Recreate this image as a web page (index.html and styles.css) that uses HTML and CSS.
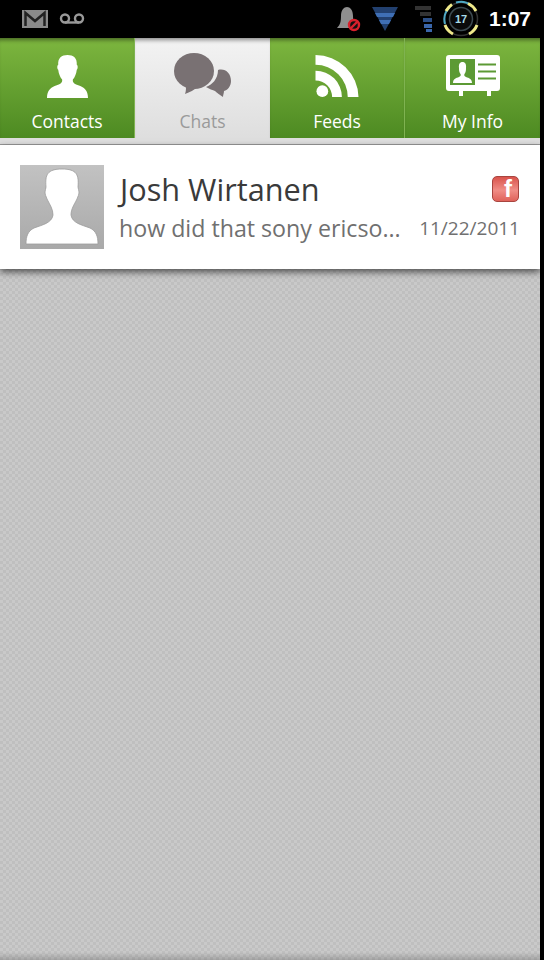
FILE: index.html
```html
<!DOCTYPE html>
<html lang="en">

<head>
    <meta charset="UTF-8">
    <title>Chats</title>
    <link rel="stylesheet" href="styles.css">
</head>

<body>
    <div class="screen">
        <div class="status">
            <div class="status-left">
                <svg class="ic-mail" width="26" height="18" viewBox="0 0 26 18">
                    <rect width="26" height="18" fill="#8a8a8a" />
                    <path d="M3.5 16V3L13 11 22.500 3V16" fill="none" stroke="#222" stroke-width="2.500" />
                </svg>
                <svg class="ic-vm" width="26" height="12" viewBox="0 0 26 12">
                    <circle cx="6" cy="5.500" r="4" fill="none" stroke="#999" stroke-width="2.400" />
                    <circle cx="20" cy="5.500" r="4" fill="none" stroke="#999" stroke-width="2.400" />
                    <path d="M6 9.500H20" stroke="#999" stroke-width="2.400" />
                </svg>
            </div>
            <div class="status-right">
                <svg class="ic-bell" width="26" height="26" viewBox="0 0 26 26">
                    <path d="M1 22C4 19 5 16 5 10 5 4 8 1 11 1 14 1 17 4 17 10 17 16 19 19 21 22Z" fill="#8f8f8f" />
                    <circle cx="18" cy="19" r="5" fill="#111" stroke="#d8202c" stroke-width="2.400" />
                    <path d="M14.500 22.500 21.500 15.500" stroke="#d8202c" stroke-width="2.400" />
                </svg>
                <svg class="ic-wifi" width="26" height="24" viewBox="0 0 26 24">
                    <path d="M0 0H26L13 24Z" fill="#22406f" />
                    <path d="M3 6H23L21 10H5ZM7 13H19L17 17H9Z" fill="#3f6fb5" />
                </svg>
                <svg class="ic-signal" width="18" height="26" viewBox="0 0 18 26">
                    <rect x="0" y="0" width="16" height="4" fill="#333" />
                    <rect x="5" y="6" width="11" height="4" fill="#333" />
                    <rect x="8" y="12" width="9" height="4" fill="#2c4f86" />
                    <rect x="9" y="18" width="8" height="4" fill="#3a66aa" />
                    <rect x="11" y="23" width="6" height="3" fill="#3a66aa" />
                </svg>
                <svg class="ic-batt" width="38" height="38" viewBox="0 0 38 38">
                    <circle cx="19" cy="19" r="16.500" fill="none" stroke="#333" stroke-width="1.500" />
                    <path d="M8 7A17 17 0 0 0 3 24M14 2.500A17 17 0 0 1 29 5" fill="none" stroke="#4fa8c4" stroke-width="2" />
                    <path d="M26 3.500A17 17 0 0 1 34 11M35 25A17 17 0 0 1 27 34M11 34A17 17 0 0 1 3 25M4 11A17 17 0 0 1 10 4.500" fill="none" stroke="#efe98a" stroke-width="3" />
                    <circle cx="19" cy="19" r="11.500" fill="#0a0a0a" stroke="#3d4a50" stroke-width="1.500" />
                    <text class="batt-num" x="19" y="23" text-anchor="middle">17</text>
                </svg>
                <span class="clock">1:07</span>
            </div>
        </div>

        <div class="tabs">
            <div class="tab">
                <svg width="41" height="43" viewBox="0 0 42 44">
                    <path d="M0 44C0 36 4 33 10 31 14 29.500 16 28 15.500 25 13.500 23 12 19 11.500 15 10 14 10.500 10 11.500 10 11 3 15 0 21 0 27 0 31 3 30.500 10 31.500 10 32 14 30.500 15 30 19 28.500 23 26.500 25 26 28 28 29.500 32 31 38 33 42 36 42 44Z" fill="#fff" />
                </svg>
                <span class="tab-label">Contacts</span>
            </div>
            <div class="tab tab-active">
                <svg class="ic-chats" width="58" height="45" viewBox="0 0 58 45">
                    <ellipse cx="20" cy="18" rx="20" ry="18" fill="#797173" />
                    <path d="M12 32C12 36 12 38 11 41 16 39 20 37 24 34Z" fill="#797173" />
                    <path d="M44 17C51 15 57 20 57 28 57 33 54 37 50 38 50 40 49 42 49 44 46 42 43 40 41 38 39 37 35 36 32 34 38 32 44 26 44 17Z" fill="#797173" />
                </svg>
                <span class="tab-label">Chats</span>
            </div>
            <div class="tab">
                <svg width="44" height="43" viewBox="0 0 44 44">
                    <circle cx="7" cy="37" r="6" fill="#fff" />
                    <path d="M0 0V10A33 33 0 0 1 33 43H44A44 44 0 0 0 0 0Z" fill="#fff" />
                    <path d="M0 16V26A17 17 0 0 1 17 43H27A27 27 0 0 0 0 16Z" fill="#fff" />
                </svg>
                <span class="tab-label">Feeds</span>
            </div>
            <div class="tab tab-last">
                <svg width="54" height="43" viewBox="0 0 54 43">
                    <path d="M3 0H51Q54 0 54 3V33Q54 36 51 36H45V41H41V36H17V41H13V36H3Q0 36 0 33V3Q0 0 3 0Z" fill="#fff" />
                    <rect x="4" y="4" width="25" height="26" fill="#5c9a34" />
                    <path d="M7 28C7 24 10 23 13 22 15 21 15 20 14.500 19 13 17 13 15 13 13 12.500 9 14 7 16.500 7 19 7 20.500 9 20 13 20 15 20 17 18.500 19 18 20 18 21 20 22 23 23 26 24 26 28Z" fill="#fff" />
                    <path d="M32 9.500H50M32 16.500H50M32 23.500H50" stroke="#5c9a34" stroke-width="2" />
                </svg>
                <span class="tab-label">My Info</span>
            </div>
        </div>
        <div class="tabs-strip"></div>

        <div class="list">
            <div class="chat-row">
                <div class="avatar">
                    <svg width="84" height="84" viewBox="0 0 84 84">
                        <path d="M6 79C6 71 8 66 14 63 22 60 32 58 33 50 33 44 30 40 27 34 26 31 25 30 25 27 25 25 26 24 26 22 25 10 27 4 42 4 57 4 59 10 58 22 58 24 59 25 59 27 59 30 58 31 57 34 54 40 51 44 51 50 52 58 62 60 70 63 76 66 78 71 78 79Z" fill="#fff" stroke="#9c9c9c" stroke-width="0.800" />
                    </svg>
                </div>
                <div class="chat-body">
                    <div class="chat-top">
                        <span class="chat-name">Josh Wirtanen</span>
                        <span class="fb-badge">f</span>
                    </div>
                    <div class="chat-bottom">
                        <span class="chat-msg">how did that sony ericso...</span>
                        <span class="chat-date">11/22/2011</span>
                    </div>
                </div>
            </div>
        </div>
    </div>
</body>

</html>
```
FILE: styles.css
```css
html,
body {
    margin: 0;
    height: 100%;
    background: #000;
    overflow: hidden;
}

.screen {
    width: 540px;
    height: 960px;
    display: flex;
    flex-direction: column;
    font-family: "Open Sans", "Noto Sans", sans-serif;
    background-color: #c4c4c4;
    background-image:
        linear-gradient(to bottom, rgba(0, 0, 0, 0) 952px, rgba(0, 0, 0, 0.18) 960px),
        repeating-conic-gradient(#bfbfbf 0 25%, #c9c9c9 0 50%);
    background-size: 100% 100%, 6px 6px;
}

.status {
    height: 38px;
    flex: none;
    background: #000;
    display: flex;
    justify-content: space-between;
    align-items: center;
}

.status-left {
    display: flex;
    align-items: center;
    padding-left: 22px;
    gap: 11px;
}

.status-right {
    display: flex;
    align-items: center;
}

.ic-bell {
    margin-right: 10px;
}

.ic-wifi {
    margin-right: 17px;
}

.ic-signal {
    margin-right: 9px;
}

.batt-num {
    font-family: "Liberation Sans", sans-serif;
    font-size: 11px;
    font-weight: 700;
    fill: #a8dcea;
}

.clock {
    color: #fff;
    font-family: "Liberation Sans", sans-serif;
    font-size: 21px;
    font-weight: 700;
    margin-left: 9px;
    margin-right: 9px;
}

.tabs {
    height: 100px;
    flex: none;
    display: flex;
}

.tab {
    width: 135px;
    display: flex;
    flex-direction: column;
    align-items: center;
    padding-top: 17px;
    box-sizing: border-box;
    background: linear-gradient(#7db63f, #4d8a22);
    border-right: 1px solid #7fb351;
    box-shadow: inset 0 5px 4px -3px rgba(0, 0, 0, 0.45);
}

.tab svg {
    display: block;
}

.tab .ic-chats {
    margin-top: -2px;
    margin-bottom: 0;
}

.tab-label {
    color: #fff;
    font-size: 17.500px;
    line-height: 24px;
    margin-top: 11px;
}

.tab-active {
    background: linear-gradient(#f3f3f3, #dedede);
    border-right: none;
}

.tab-active .tab-label {
    color: #9a9a9a;
}

.tab-last {
    border-right: none;
}

.tabs-strip {
    height: 6px;
    flex: none;
    background: #dedede;
    border-bottom: 1px solid #9a9a9a;
}

.chat-row {
    height: 124px;
    box-sizing: border-box;
    background: #fff;
    display: flex;
    align-items: center;
    padding: 0 20px;
    box-shadow: 0 3px 7px rgba(0, 0, 0, 0.6);
}

.avatar {
    width: 84px;
    height: 84px;
    flex: none;
    background: linear-gradient(#c2c2c2, #a9a9a9);
}

.avatar svg {
    display: block;
}

.chat-body {
    flex: 1;
    margin-left: 15px;
    margin-bottom: 2px;
}

.chat-top,
.chat-bottom {
    display: flex;
    justify-content: space-between;
    align-items: center;
}

.chat-name {
    color: #3a3a3a;
    font-size: 30.700px;
    line-height: 40px;
    margin-left: 1px;
}

.fb-badge {
    width: 27px;
    height: 26px;
    margin-right: 1px;
    box-sizing: border-box;
    border: 1px solid #a8453f;
    border-radius: 5px;
    background: linear-gradient(#d9534c, #f08d86 55%, #e0625a);
    color: #fff;
    font-family: "Liberation Sans", sans-serif;
    font-size: 24px;
    font-weight: 700;
    line-height: 24px;
    text-align: right;
    padding-right: 6px;
}

.chat-bottom {
    margin-top: 3px;
}

.chat-msg {
    color: #707070;
    font-size: 23.200px;
    line-height: 32px;
}

.chat-date {
    color: #707070;
    font-size: 19px;
    line-height: 32px;
}
```
